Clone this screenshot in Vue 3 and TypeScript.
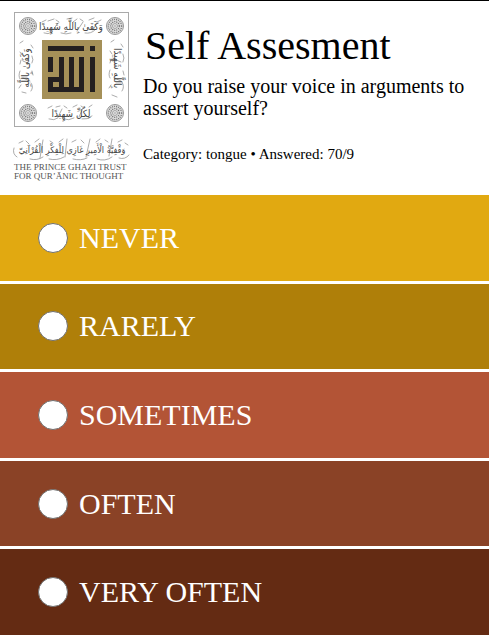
<script setup lang="ts">
import { ref } from 'vue'

interface Answer {
  value: string
  label: string
}

const answers: Answer[] = [
  { value: 'never', label: 'NEVER' },
  { value: 'rarely', label: 'RARELY' },
  { value: 'sometimes', label: 'SOMETIMES' },
  { value: 'often', label: 'OFTEN' },
  { value: 'very-often', label: 'VERY OFTEN' },
]

const rosettes = [
  { x: 15, y: 15 },
  { x: 102, y: 15 },
  { x: 15, y: 102 },
  { x: 102, y: 102 },
]

const selected = ref('')
</script>

<template>
  <main class="page">
    <header class="header">
      <svg class="emblem" viewBox="0 0 118 172" role="img" aria-label="The Prince Ghazi Trust">
        <rect x="1.5" y="1.5" width="114" height="114" fill="#fff" stroke="#aaa" />
        <g v-for="r in rosettes" :key="`${r.x}-${r.y}`" :transform="`translate(${r.x} ${r.y})`" fill="none">
          <circle r="8.5" fill="#e0e0e0" stroke="#999" />
          <circle r="6.6" stroke="#777" stroke-width="1.4" stroke-dasharray="1 1" />
          <circle r="4.3" stroke="#777" stroke-width="1.2" stroke-dasharray="1.2 .9" />
          <circle r="2.4" fill="#fff" stroke="#888" stroke-width=".8" />
          <path d="M-1.5 0h3M0-1.5v3" stroke="#999" stroke-width=".7" />
        </g>

        <g class="flourish">
          <path
            d="M29 11l4-2M31 22q4 2 8-1M35 10l6-2M43 9l3 2M48 22q5 2 10 0M54 8l5-1M60 11l4-3M67 8l3 2M72 22q6 1 10-3M76 9l5-2M84 11l4-2M40 19l5-7M64 20l6-9M80 19l4-7"
          />
          <path
            d="M35 97l4-2M36 108q5 2 9-1M43 96l4-1M51 95l3 2M50 108q6 2 11-1M60 96l4-2M68 95l3 2M69 108q5 1 10-3M76 96l3-2M45 106l4-8M66 106l4-9"
          />
          <path
            d="M7 32l3-2M18 34l2 3M7 41l2 3M19 45q2 4 0 7M7 53l1-4M7 60q-2 5 0 8M19 60l1 4M8 74l-2 3M18 72q3 4 0 8M9 81l4 1M10 50l7 3M10 67l7 3"
          />
          <path
            d="M98 31l3-2M108 33l2 3M97 40l2 3M110 43q2 4 0 8M97 52l1-4M97 59q-2 5 0 8M110 60l1 4M98 74l-2 3M109 71q3 5 0 9M99 84l5 2M101 48l7 3M101 67l7 3"
          />
          <path
            d="M1 137q-2 6 3 9M6 132l4-2M13 130l3 3M17 148q7 2 13-2M22 131l4-3M30 129l-3 18M37 130l3 2M36 148q8 2 15-2M46 131l4-3M54 128l-2 18M59 131l4-2M60 148q8 2 14-1M68 129l3 3M77 128l-4 18M83 131l4-3M84 148q8 3 15-2M92 129l3 2M99 128l-3 17M105 131l4-2M106 147q6 2 10-3M112 132l3 2"
          />
        </g>
        <g class="script">
          <text class="large" x="58" y="19">وَكَفَىٰ بِاللَّهِ شَهِيدًا</text>
          <text class="large" x="58" y="106">لِكُلِّ شَهِيدًا</text>
          <text class="large" transform="translate(16 57) rotate(-90)">وَكَفَىٰ بِاللَّهِ</text>
          <text class="large" transform="translate(101 57) rotate(90)">بِاللَّهِ شَهِيدًا</text>
          <text x="59" y="142">وَقْفِيَّةُ الْأَمِيرِ غَازِي لِلْفِكْرِ الْقُرْآنِيّ</text>
        </g>

        <rect x="29" y="29" width="60" height="59" fill="#a59058" />
        <g fill="#231f20">
          <path d="M35 35h36v5H35zM77 35h5v5h-5zM77 46h5v35h-5zM35 46h5v15h-5z" />
          <path fill-rule="evenodd" d="M46 46h5v30h5V46h5v30h5V46h5v35H35V66h11zM40 71v5h6v-5z" />
        </g>

        <g class="latin">
          <text x="1" y="159">THE PRINCE GHAZI TRUST</text>
          <text x="1" y="168">FOR QUR’ĀNIC THOUGHT</text>
        </g>
      </svg>
      <div class="intro">
        <h1>Self Assesment</h1>
        <p id="question" class="question">Do you raise your voice in arguments to assert yourself?</p>
        <p class="meta">Category: tongue • Answered: 70/9</p>
      </div>
    </header>

    <div class="answers" role="radiogroup" aria-labelledby="question">
      <label v-for="a in answers" :key="a.value" class="answer" :class="a.value">
        <input v-model="selected" type="radio" name="answer" :value="a.value" />
        <span>{{ a.label }}</span>
      </label>
    </div>
  </main>
</template>

<style>
body {
  background: #fff;
}
</style>

<style scoped>
.page {
  display: flex;
  flex-direction: column;
  box-sizing: border-box;
  min-height: 100vh;
  padding-bottom: 5px;
  border-top: 1px solid #000;
  color: #000;
  font-family: Baskerville, "Liberation Serif", serif;
}

.header {
  display: flex;
  align-items: flex-start;
  gap: 12px;
  padding: 10px 16px 12px 13px;
}

.emblem {
  display: block;
  flex: none;
  width: 118px;
}

.flourish {
  fill: none;
  stroke: #888;
  stroke-linecap: round;
  stroke-width: 0.7;
}

.script {
  fill: #444;
  font-family: "DejaVu Sans Condensed", "DejaVu Sans", sans-serif;
  font-size: 9px;
  text-anchor: middle;
}

.large {
  font-size: 10px;
}

.latin {
  fill: #555;
  font-family: "Liberation Serif", serif;
  font-size: 9px;
}

h1 {
  margin: 0;
  padding: 13px 0 0 2px;
  font-size: 40px;
  font-weight: 400;
  line-height: 44px;
}

.question {
  margin: 7px 0 0;
  font-size: 20px;
  line-height: 22px;
}

.meta {
  margin: 26px 0 0;
  font-size: 15px;
  line-height: 18px;
}

.answers {
  display: grid;
  flex: 1;
  grid-auto-rows: 1fr;
  gap: 3px;
}

.answer {
  display: flex;
  align-items: center;
  gap: 11px;
  padding: 8px 38px;
  color: #fff;
  font-size: 30px;
  line-height: 36px;
  cursor: pointer;
}

.answer input {
  appearance: none;
  box-sizing: border-box;
  flex: none;
  width: 30px;
  height: 30px;
  margin: 0;
  border: 1px solid #707070;
  border-radius: 50%;
  background: #fff;
}

.answer input:checked {
  background: radial-gradient(circle, #642c13 0 7px, #fff 8px);
}

.never {
  background: #e1a911;
}

.rarely {
  background: #af7f09;
}

.sometimes {
  background: #b35436;
}

.often {
  background: #8a4226;
}

.very-often {
  background: #642b13;
}
</style>
